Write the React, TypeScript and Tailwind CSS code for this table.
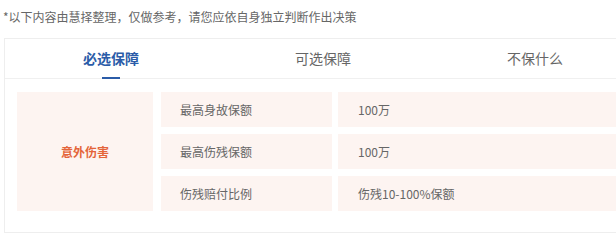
import React from 'react';

const rows = [
  { label: '最高身故保额', value: '100万' },
  { label: '最高伤残保额', value: '100万' },
  { label: '伤残赔付比例', value: '伤残10-100%保额' },
];

const tabs = ['必选保障', '可选保障', '不保什么'];

export default function App() {
  return (
    <div
      className="w-[616px] h-[240px] overflow-hidden bg-white"
      style={{ fontFamily: '"Microsoft YaHei", "Noto Sans CJK SC", sans-serif' }}
    >
      <p className="pl-[3px] pt-[9px] text-[12px] leading-[16px] text-[#666]">
        *以下内容由慧择整理，仅做参考，请您应依自身独立判断作出决策
      </p>
      <div className="mt-[13px] ml-[4px] w-[638px] border border-[#eeeeee]">
        <div className="flex h-[40px] border-b border-[#f0f0f0]">
          {tabs.map((tab, i) => (
            <div
              key={tab}
              className="relative flex flex-1 items-center justify-center text-[14px]"
            >
              <span className={i === 0 ? 'font-bold text-[#2b5ca8]' : 'text-[#666]'}>
                {tab}
              </span>
              {i === 0 && (
                <span className="absolute bottom-[-1px] left-1/2 h-[2px] w-[18px] -translate-x-1/2 bg-[#2b5ca8]" />
              )}
            </div>
          ))}
        </div>
        <div className="flex gap-[8px] px-[12px] pt-[13px] pb-[21px]">
          <div className="flex w-[136px] items-center justify-center bg-[#fdf4f1] text-[12px] font-bold text-[#e4643a]">
            意外伤害
          </div>
          <div className="flex flex-1 flex-col gap-[7px]">
            {rows.map((row) => (
              <div key={row.label} className="flex h-[35px] gap-[6px] text-[12px] text-[#666]">
                <div className="flex w-[171px] items-center bg-[#fdf4f1] pl-[19px]">
                  {row.label}
                </div>
                <div className="flex flex-1 items-center bg-[#fdf4f1] pl-[20px]">
                  {row.value}
                </div>
              </div>
            ))}
          </div>
        </div>
      </div>
    </div>
  );
}
